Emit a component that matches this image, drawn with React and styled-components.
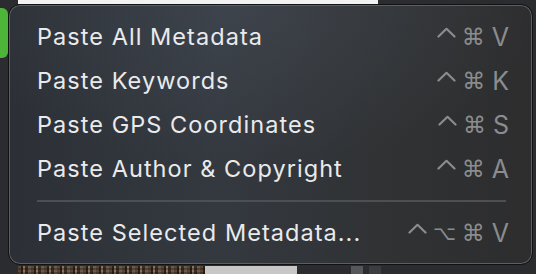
import React from "react";
import styled, { createGlobalStyle } from "styled-components";

const Global = createGlobalStyle`
  html, body { margin: 0; padding: 0; background: #2a2c2f; }
  body { width: 536px; height: 274px; overflow: hidden; font-family: Inter, "Noto Sans", sans-serif; }
`;

const Desktop = styled.div`
  position: relative;
  width: 536px;
  height: 274px;
  display: flex;
  flex-direction: column;
  background: #2a2c2f;
`;

const TopStrip = styled.div`
  height: 4px;
  display: flex;
  padding-left: 18px;
`;

const WhitePanel = styled.div`
  width: 360px;
  background: #f2f2f2;
`;

const Middle = styled.div`
  flex: 1;
  display: flex;
  padding-top: 4px;
`;

const GreenTab = styled.div`
  width: 8px;
  height: 50px;
  background: #4db53a;
  border-radius: 0 6px 6px 0;
`;

const BottomStrip = styled.div`
  height: 8px;
  display: flex;
  padding-left: 18px;
`;

const Photo = styled.div`
  width: 187px;
  background:
    repeating-linear-gradient(0deg, rgba(0,0,0,0.25) 0 2px, transparent 2px 4px),
    repeating-linear-gradient(90deg, #5a4636 0 3px, #2b2019 3px 5px, #8a7360 5px 7px, #3a2d23 7px 10px, #6b5a4a 10px 13px);
`;

const GreyBlock = styled.div`
  width: ${(p) => p.$w}px;
  margin-left: ${(p) => p.$m || 0}px;
  background: ${(p) => p.$c};
`;

const Menu = styled.div`
  position: absolute;
  left: 8px;
  top: 4px;
  width: 525px;
  height: 261px;
  box-sizing: border-box;
  border: 1px solid #111214;
  border-radius: 12px;
  box-shadow: inset 0 0 0 1px #5c5e61;
  background:
    radial-gradient(ellipse 300px 160px at 240px 0px, rgba(80, 88, 100, 0.35), transparent),
    linear-gradient(90deg, #2c3036 0%, #343940 40%, #303234 70%, #2d2d2e 100%);
  padding: 10px 23px 9px 28px;
  display: flex;
  flex-direction: column;
`;

const Row = styled.div`
  height: 44px;
  display: flex;
  align-items: center;
  justify-content: space-between;
`;

const Label = styled.span`
  color: #e9eaec;
  font-size: 23.5px;
  letter-spacing: 1.05px;
  margin-top: -1px;
`;

const Keys = styled.span`
  display: flex;
  align-items: center;
  gap: 6px;
  color: #8b8c8e;
`;

const Letter = styled.span`
  display: inline-block;
  font-family: Inter, sans-serif;
  font-size: 25px;
  line-height: 1;
  margin-left: 1px;
`;

const Symbol = styled.span`
  display: inline-block;
  font-family: "DejaVu Sans", sans-serif;
  font-size: ${(p) => p.$size}px;
  line-height: 1;
`;

const CtrlIcon = styled.svg`
  width: 19px;
  height: 11px;
  margin-bottom: 9px;
`;

const Separator = styled.div`
  height: 20px;
  display: flex;
  align-items: center;
  padding-right: 3px;
  &::after {
    content: "";
    flex: 1;
    height: 2px;
    background: #4c4f53;
  }
`;

const items = [
  { label: "Paste All Metadata", keys: ["⌃", "⌘", "V"] },
  { label: "Paste Keywords", keys: ["⌃", "⌘", "K"] },
  { label: "Paste GPS Coordinates", keys: ["⌃", "⌘", "S"] },
  { label: "Paste Author & Copyright", keys: ["⌃", "⌘", "A"] },
];

function KeyGlyph({ k }) {
  if (k === "⌃")
    return (
      <CtrlIcon viewBox="0 0 19 11" aria-label="⌃">
        <polyline points="1.5,9.5 9.5,1.8 17.5,9.5" fill="none" stroke="#8b8c8e" strokeWidth="2.2" strokeLinecap="round" strokeLinejoin="round" />
      </CtrlIcon>
    );
  if (k === "⌘") return <Symbol $size={23}>⌘</Symbol>;
  if (k === "⌥") return <Symbol $size={20}>⌥</Symbol>;
  return <Letter>{k}</Letter>;
}

function Shortcut({ keys }) {
  return (
    <Keys>
      {keys.map((k, i) => (
        <KeyGlyph key={i} k={k} />
      ))}
    </Keys>
  );
}

export default function App() {
  return (
    <>
      <Global />
      <Desktop>
        <TopStrip>
          <WhitePanel />
        </TopStrip>
        <Middle>
          <GreenTab />
        </Middle>
        <BottomStrip>
          <Photo />
          <GreyBlock $w={92} $c="#c8c6c7" />
          <GreyBlock $w={12} $m={54} $c="#55575a" />
          <GreyBlock $w={12} $m={6} $c="#3b3d40" />
        </BottomStrip>
        <Menu>
          {items.map((it) => (
            <Row key={it.label}>
              <Label>{it.label}</Label>
              <Shortcut keys={it.keys} />
            </Row>
          ))}
          <Separator />
          <Row>
            <Label>Paste Selected Metadata...</Label>
            <Shortcut keys={["⌃", "⌥", "⌘", "V"]} />
          </Row>
        </Menu>
      </Desktop>
    </>
  );
}
